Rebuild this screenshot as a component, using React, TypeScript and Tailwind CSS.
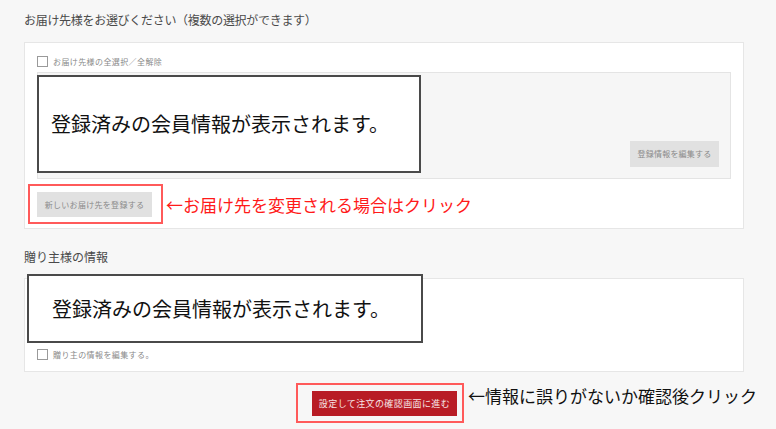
import React from "react";

const jp = { fontFamily: '"Noto Sans CJK JP", "Noto Sans", sans-serif' };

function Checkbox({ label }: { label: string }) {
  return (
    <div className="flex items-center h-[11px]">
      <span className="w-[11px] h-[11px] border border-[#9a9a9a] bg-white shrink-0" />
      <span className="ml-[5px] text-[8px] leading-[11px] tracking-[0.4px] text-[#8a8a8a]">{label}</span>
    </div>
  );
}

function Overlay({ className }: { className: string }) {
  return (
    <div className={"absolute bg-white border-2 border-[#4a4a4a] flex items-center " + className}>
      <span className="text-[20px] leading-[24px] text-[#111] whitespace-nowrap">登録済みの会員情報が表示されます。</span>
    </div>
  );
}

export default function App() {
  return (
    <div style={jp} className="w-[776px] h-[429px] bg-[#f7f7f7] pl-[24px] pt-[12px] flex flex-col overflow-hidden">
      <div className="text-[12px] leading-[16px] text-[#4a4a4a] tracking-[-0.3px]">
        お届け先様をお選びください（複数の選択ができます）
      </div>

      <div className="mt-[14px] w-[720px] border border-[#e6e6e6] bg-white px-[12px] pt-[13px] pb-[11px]">
        <Checkbox label="お届け先様の全選択／全解除" />
        <div className="relative mt-[5px] h-[107px] border border-[#e4e4e4] bg-[#f6f6f6] flex items-end justify-end p-[11px]">
          <Overlay className="left-[-1px] top-[2px] w-[384px] h-[98px] pl-[12px]" />
          <div className="w-[89px] h-[26px] bg-[#e1e1e1] flex items-center justify-center text-[8px] tracking-[0.2px] text-[#8a8a8a]">
            登録情報を編集する
          </div>
        </div>
        <div className="relative mt-[13px] w-[115px] h-[25px]">
          <div className="absolute left-[-9px] right-[-11px] top-[-8px] bottom-[-7px] border-2 border-[#ff5a5a]" />
          <div className="relative w-full h-full bg-[#e1e1e1] flex items-center justify-center text-[8px] tracking-[0.3px] text-[#8a8a8a]">
            新しいお届け先を登録する
          </div>
          <div className="absolute left-[calc(100%+14px)] top-1/2 -translate-y-1/2 whitespace-nowrap text-[17px] leading-[22px] text-[#ff1a1a]">
            ←お届け先を変更される場合はクリック
          </div>
        </div>
      </div>

      <div className="mt-[20px] text-[12px] leading-[16px] text-[#4a4a4a]">贈り主様の情報</div>

      <div className="relative mt-[13px] w-[720px] border border-[#e6e6e6] bg-white px-[12px] pt-[70px] pb-[11px]">
        <Overlay className="left-[2px] top-[-5px] w-[396px] h-[69px] pl-[23px]" />
        <Checkbox label="贈り主の情報を編集する。" />
      </div>

      <div className="relative mt-[19px] ml-[288px] w-[145px] h-[25px]">
        <div className="absolute left-[-16px] right-[-7px] top-[-8px] bottom-[-7px] border-2 border-[#ff5a5a]" />
        <div className="relative w-full h-full bg-[#b81c25] flex items-center justify-center text-[9px] tracking-[0.4px] text-[#f6e4e4]">
          設定して注文の確認画面に進む
        </div>
        <div className="absolute left-[calc(100%+11px)] top-[-6px] whitespace-nowrap text-[17px] leading-[22px] text-[#111]">
          ←情報に誤りがないか確認後クリック
        </div>
      </div>
    </div>
  );
}
